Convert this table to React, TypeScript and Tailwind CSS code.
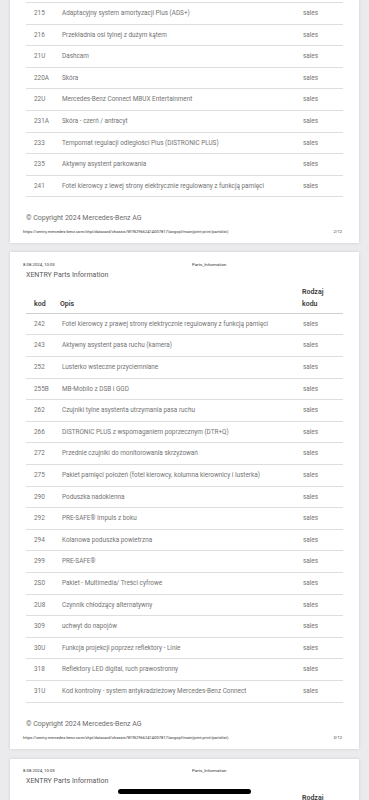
import React from "react";

type Row = [string, string];

const page2Rows: Row[] = [
  ["215", "Adaptacyjny system amortyzacji Plus (ADS+)"],
  ["216", "Przekładnia osi tylnej z dużym kątem"],
  ["21U", "Dashcam"],
  ["220A", "Skóra"],
  ["22U", "Mercedes-Benz Connect MBUX Entertainment"],
  ["231A", "Skóra - czerń / antracyt"],
  ["233", "Tempomat regulacji odległości Plus (DISTRONIC PLUS)"],
  ["235", "Aktywny asystent parkowania"],
  ["241", "Fotel kierowcy z lewej strony elektrycznie regulowany z funkcją pamięci"],
];

const page3Rows: Row[] = [
  ["242", "Fotel kierowcy z prawej strony elektrycznie regulowany z funkcją pamięci"],
  ["243", "Aktywny asystent pasa ruchu (kamera)"],
  ["252", "Lusterko wsteczne przyciemniane"],
  ["255B", "MB-Mobilo z DSB i GGD"],
  ["262", "Czujniki tylne asystenta utrzymania pasa ruchu"],
  ["266", "DISTRONIC PLUS z wspomaganiem poprzecznym (DTR+Q)"],
  ["272", "Przednie czujniki do monitorowania skrzyżowań"],
  ["275", "Pakiet pamięci położeń (fotel kierowcy, kolumna kierownicy i lusterka)"],
  ["290", "Poduszka nadokienna"],
  ["292", "PRE-SAFE® Impuls z boku"],
  ["294", "Kolanowa poduszka powietrzna"],
  ["299", "PRE-SAFE®"],
  ["2S0", "Pakiet - Multimedia/ Treści cyfrowe"],
  ["2U8", "Czynnik chłodzący alternatywny"],
  ["309", "uchwyt do napojów"],
  ["30U", "Funkcja projekcji poprzez reflektory - Linie"],
  ["318", "Reflektory LED digital, ruch prawostronny"],
  ["31U", "Kod kontrolny - system antykradzieżowy Mercedes-Benz Connect"],
];

const URL =
  "https://xentry.mercedes-benz.com/xhpi/datacard/chassis/W1N2966241A007817;lang=pl/main(print:print/partslist)";

function Rows({ rows }: { rows: Row[] }) {
  return (
    <>
      {rows.map(([code, desc]) => (
        <div
          key={code}
          className="flex h-[21.6px] items-center border-b border-[#dedede] pt-[1px] text-[6.4px] text-[#747474]"
        >
          <div className="w-[36px] pl-[8px]">{code}</div>
          <div className="flex-1 whitespace-nowrap">{desc}</div>
          <div className="w-[40px]">sales</div>
        </div>
      ))}
    </>
  );
}

function PageHeader() {
  return (
    <>
      <div className="flex pl-[13px] pt-[9.5px] text-[4.3px] leading-[5px] text-[#333]">
        <div className="w-[169px]">8.08.2024, 10:03</div>
        <div>Parts_Information</div>
      </div>
      <div className="mt-[4px] pl-[16px] text-[7px] leading-[8px] text-[#5a5a5a]">
        XENTRY Parts Information
      </div>
    </>
  );
}

function TableHead() {
  return (
    <div className="mx-[16px] mt-[7px] flex items-end border-b border-[#cfcfcf] pb-[3px] text-[7px] font-semibold leading-[12px] text-[#3a3a3a]">
      <div className="w-[34px] pl-[8px]">kod</div>
      <div className="flex-1">Opis</div>
      <div className="w-[41px]">
        Rodzaj
        <br />
        kodu
      </div>
    </div>
  );
}

function PageFooter({ pageNo }: { pageNo: string }) {
  return (
    <>
      <div className="mt-[17px] pl-[16px] text-[7px] leading-[8px] text-[#6a6a6a]">
        © Copyright 2024 Mercedes-Benz AG
      </div>
      <div className="mt-[7px] flex pl-[13px] pr-[17px] pb-[9px] text-[4px] leading-[5px] text-[#333]">
        <div className="flex-1 whitespace-nowrap">{URL}</div>
        <div>{pageNo}</div>
      </div>
    </>
  );
}

export default function App() {
  return (
    <div
      className="relative h-[800px] w-[369px] overflow-hidden bg-[#ebebee] px-[10px]"
      style={{ fontFamily: "Roboto, 'Liberation Sans', sans-serif" }}
    >
      {/* page 2 (top cut off) */}
      <div className="bg-white pt-[2px] shadow-[0_0_3px_rgba(0,0,0,0.12)]">
        <div className="mx-[16px] border-t border-[#dedede]">
          <Rows rows={page2Rows} />
        </div>
        <PageFooter pageNo="2/12" />
      </div>

      {/* page 3 */}
      <div className="mt-[9px] bg-white shadow-[0_0_3px_rgba(0,0,0,0.12)]">
        <PageHeader />
        <TableHead />
        <div className="mx-[16px]">
          <Rows rows={page3Rows} />
        </div>
        <PageFooter pageNo="3/12" />
      </div>

      {/* page 4 (bottom cut off) */}
      <div className="mt-[10px] h-[200px] bg-white shadow-[0_0_3px_rgba(0,0,0,0.12)]">
        <PageHeader />
        <TableHead />
      </div>

      {/* home indicator */}
      <div className="absolute bottom-[6px] left-[118px] h-[5px] w-[133px] rounded-full bg-black" />
    </div>
  );
}
